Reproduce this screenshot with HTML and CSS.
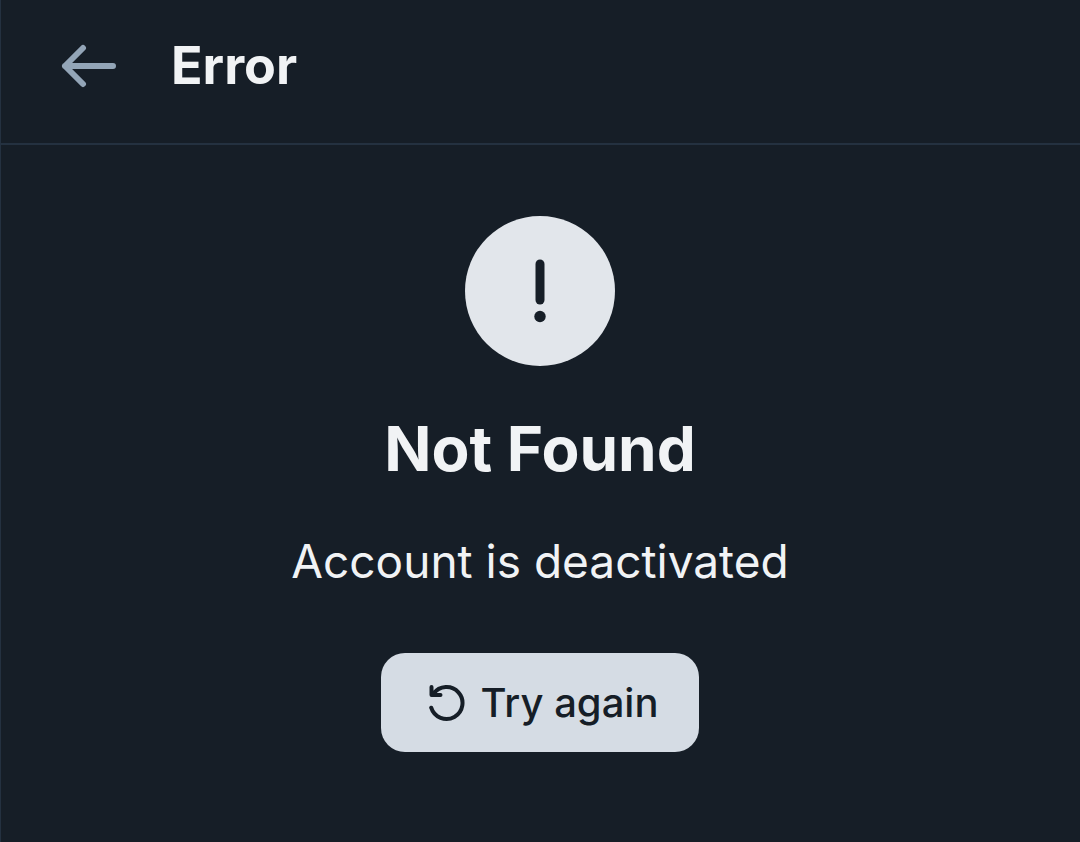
FILE: index.html
```html
<!DOCTYPE html>
<html lang="en">
<head>
  <meta charset="utf-8">
  <meta name="viewport" content="width=device-width, initial-scale=1">
  <title>Error</title>
  <link rel="stylesheet" href="styles.css">
</head>
<body>
  <div class="screen">
    <header class="header">
      <button class="back-button" type="button" aria-label="Back">
        <svg class="back-icon" viewBox="0 0 56 44">
          <path d="M22 4 4 22l18 18M4 22h48"/>
        </svg>
      </button>
      <h1 class="header-title">Error</h1>
    </header>
    <main class="content">
      <div class="badge">
        <svg class="badge-icon" viewBox="0 0 12 64">
          <path d="M6 5v36"/>
          <circle cx="6" cy="57.5" r="5.7"/>
        </svg>
      </div>
      <h2 class="title">Not Found</h2>
      <p class="message">Account is deactivated</p>
      <button class="retry-button" type="button">
        <svg class="retry-icon" viewBox="0 0 36 38">
          <path d="M2.500 3v8h9M4.500 9.700A16 16 0 1 1 2.200 23.700"/>
        </svg>
        Try again
      </button>
    </main>
  </div>
</body>
</html>
```

FILE: styles.css
```css
body {
  margin: 0;
  background-color: #161e27;
  color: #f1f3f5;
  font-family: Inter, "Liberation Sans", sans-serif;
}

.screen {
  min-height: 100vh;
  box-shadow: inset 1px 0 #243140;
}

.header {
  display: flex;
  align-items: center;
  gap: 54px;
  padding: 32px 60px 43px 61px;
  border-bottom: 2px solid #243140;
}

.header-title {
  margin: 0;
  font-size: 52px;
  font-weight: 700;
  line-height: 68px;
}

.back-button {
  display: flex;
  padding: 0;
  border: none;
  background: none;
  color: #93a5b7;
  cursor: pointer;
}

.back-icon {
  width: 56px;
  height: 44px;
  fill: none;
  stroke: currentColor;
  stroke-width: 6;
  stroke-linecap: round;
  stroke-linejoin: round;
}

.content {
  display: flex;
  flex-direction: column;
  align-items: center;
  padding: 71px 60px;
}

.badge {
  display: flex;
  align-items: center;
  justify-content: center;
  width: 150px;
  height: 150px;
  border-radius: 50%;
  background-color: #e2e6eb;
  color: #161e27;
}

.badge-icon {
  width: 12px;
  height: 64px;
  fill: currentColor;
}

.badge-icon path {
  stroke: currentColor;
  stroke-width: 9;
  stroke-linecap: round;
}

.title {
  margin: 45px 0 0;
  font-size: 62px;
  font-weight: 700;
  line-height: 76px;
}

.message {
  margin: 44px 0 0;
  font-size: 46px;
  line-height: 60px;
}

.retry-button {
  display: flex;
  align-items: center;
  gap: 16px;
  margin-top: 62px;
  padding: 26px 41px 25px 48px;
  border: none;
  border-radius: 24px;
  background-color: #d5dce4;
  color: #161e27;
  font-family: inherit;
  font-size: 40px;
  font-weight: 500;
  line-height: 48px;
  cursor: pointer;
}

.retry-icon {
  width: 36px;
  height: 38px;
  fill: none;
  stroke: currentColor;
  stroke-width: 4;
  stroke-linecap: round;
  stroke-linejoin: round;
}
```
